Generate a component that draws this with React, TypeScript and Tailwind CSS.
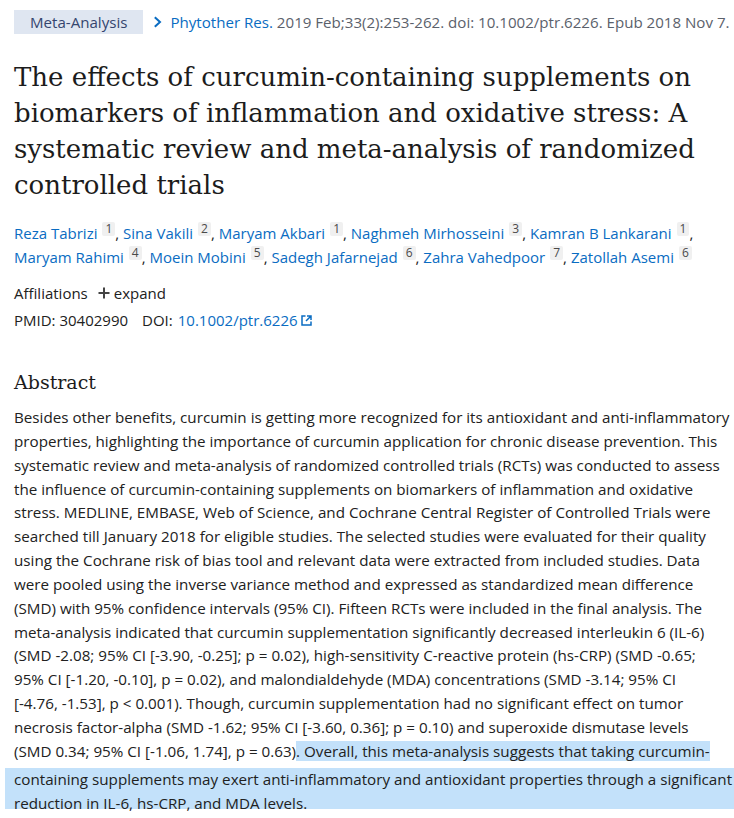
import React from "react";

const Sup = ({ n }: { n: string }) => (
  <span className="relative -top-[6px] ml-[5px] inline-block rounded-[2px] bg-[#f0f0f0] px-[3px] text-[12px] leading-[14px] text-[#4a4a4a]">
    {n}
  </span>
);

const A = ({ children }: { children: React.ReactNode }) => (
  <a className="text-[#0a6cc2]">{children}</a>
);

const lines = [
  "Besides other benefits, curcumin is getting more recognized for its antioxidant and anti-inflammatory",
  "properties, highlighting the importance of curcumin application for chronic disease prevention. This",
  "systematic review and meta-analysis of randomized controlled trials (RCTs) was conducted to assess",
  "the influence of curcumin-containing supplements on biomarkers of inflammation and oxidative",
  "stress. MEDLINE, EMBASE, Web of Science, and Cochrane Central Register of Controlled Trials were",
  "searched till January 2018 for eligible studies. The selected studies were evaluated for their quality",
  "using the Cochrane risk of bias tool and relevant data were extracted from included studies. Data",
  "were pooled using the inverse variance method and expressed as standardized mean difference",
  "(SMD) with 95% confidence intervals (95% CI). Fifteen RCTs were included in the final analysis. The",
  "meta-analysis indicated that curcumin supplementation significantly decreased interleukin 6 (IL-6)",
  "(SMD -2.08; 95% CI [-3.90, -0.25]; p = 0.02), high-sensitivity C-reactive protein (hs-CRP) (SMD -0.65;",
  "95% CI [-1.20, -0.10], p = 0.02), and malondialdehyde (MDA) concentrations (SMD -3.14; 95% CI",
  "[-4.76, -1.53], p < 0.001). Though, curcumin supplementation had no significant effect on tumor",
  "necrosis factor-alpha (SMD -1.62; 95% CI [-3.60, 0.36]; p = 0.10) and superoxide dismutase levels",
];

export default function App() {
  const authors: [string, string][] = [
    ["Reza Tabrizi", "1"],
    ["Sina Vakili", "2"],
    ["Maryam Akbari", "1"],
    ["Naghmeh Mirhosseini", "3"],
    ["Kamran B Lankarani", "1"],
    ["Maryam Rahimi", "4"],
    ["Moein Mobini", "5"],
    ["Sadegh Jafarnejad", "6"],
    ["Zahra Vahedpoor", "7"],
    ["Zatollah Asemi", "6"],
  ];
  return (
    <div className="min-h-[818px] w-[734px] overflow-hidden bg-white px-[14px] font-['Open_Sans',sans-serif] text-[#212121]">
      <div className="flex items-center pt-[10px] text-[15.1px] leading-[24px]">
        <span className="shrink-0 whitespace-nowrap bg-[#dfe6f1] px-[16px] text-[#34456e]">Meta-Analysis</span>
        <svg className="ml-[10px] mr-[8px] shrink-0" width="9" height="12" viewBox="0 0 9 12" fill="none">
          <path d="M1.8 1.2 L7 6 L1.8 10.8" stroke="#0a6cc2" strokeWidth="2" />
        </svg>
        <span className="whitespace-nowrap">
          <A>Phytother Res.</A>
          <span className="text-[#5b616b]"> 2019 Feb;33(2):253-262. doi: 10.1002/ptr.6226. Epub 2018 Nov 7.</span>
        </span>
      </div>

      <h1 className="mt-[25px] font-['DejaVu_Serif',serif] text-[26px] leading-[36px] text-[#1c1c1c]">
        The effects of curcumin-containing supplements on biomarkers of inflammation and oxidative stress: A systematic review and meta-analysis of randomized controlled trials
      </h1>

      <div className="mt-[18px] text-[15px] leading-[24px]">
        {authors.map(([name, n], i) => (
          <span key={name}>
            <A>{name}</A>
            <Sup n={n} />
            {i < authors.length - 1 ? ", " : ""}
          </span>
        ))}
      </div>

      <div className="mt-[12px] flex items-center text-[15px] leading-[24px]">
        <span>Affiliations</span>
        <svg className="ml-[10px] mr-[4px]" width="12" height="12" viewBox="0 0 12 12">
          <path d="M6 0.5 V11.5 M0.5 6 H11.5" stroke="#444" strokeWidth="2" />
        </svg>
        <span>expand</span>
      </div>
      <div className="mt-[3px] flex items-center text-[15px] leading-[24px]">
        <span>PMID: 30402990</span>
        <span className="ml-[14px]">DOI: </span>
        <A>
          <span className="ml-[5px]">10.1002/ptr.6226</span>
        </A>
        <svg className="ml-[3px]" width="11" height="11" viewBox="0 0 11 11" fill="none">
          <path d="M4.5 1 H1 V10 H10 V6.5" stroke="#0a6cc2" strokeWidth="1.5" />
          <path d="M5 6 L9.5 1.5 M6 1 H10 V5" stroke="#0a6cc2" strokeWidth="1.5" />
        </svg>
      </div>

      <h2 className="mt-[35px] font-['DejaVu_Serif',serif] text-[19px] leading-[30px] text-[#1c1c1c]">Abstract</h2>

      <div className="mt-[9px] whitespace-nowrap text-[15.2px] leading-[23.85px]">
        <p>
          {lines.map((l) => (
            <React.Fragment key={l}>
              {l}
              <br />
            </React.Fragment>
          ))}
          (SMD 0.34; 95% CI [-1.06, 1.74], p = 0.63)
          <span className="bg-[#c3e1fa]">. Overall, this meta-analysis suggests that taking curcumin-</span>
        </p>
        <p className="-ml-[9px] -mr-[14px] mt-[4px] h-[41px] bg-[#c3e1fa] pl-[9px]">
          containing supplements may exert anti-inflammatory and antioxidant properties through a significant
          <br />
          reduction in IL-6, hs-CRP, and MDA levels.
        </p>
      </div>
    </div>
  );
}
